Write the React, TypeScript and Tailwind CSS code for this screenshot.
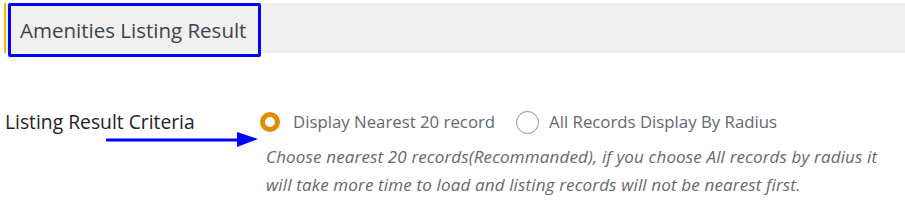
import React from 'react';

export default function App() {
    return (
        <div className="w-[905px] h-[222px] bg-white" style={{ fontFamily: '"Open Sans", "Noto Sans", sans-serif' }}>
            <div className="relative ml-[4px] mt-[3px] h-[50px] bg-[#f0f0f0] border-l-2 border-[#f0c000]">
                <div className="absolute left-[2px] top-0 w-[253px] h-[54px] border-[3px] border-[#0000ff] rounded-[2px]"></div>
                <h2 className="pl-[14px] pt-[13px] text-[20.5px] leading-[28px] text-[#3c434a]">Amenities Listing Result</h2>
            </div>

            <div className="flex mt-[57px]">
                <div className="relative w-[260px] shrink-0 pl-[5px]">
                    <div className="text-[19.3px] leading-[24px] text-[#1d2327]">Listing Result Criteria</div>
                    <svg className="absolute left-[106px] top-[21px]" width="154" height="18" viewBox="0 0 154 18">
                        <line x1="1" y1="9" x2="134" y2="9" stroke="#0000ff" strokeWidth="3" strokeLinecap="round" />
                        <polygon points="131,1 152,8 131,16" fill="#0000ff" />
                    </svg>
                </div>
                <div>
                    <div className="flex items-center h-[24px]">
                        <span className="w-[20px] h-[20px] rounded-full border-[5px] border-[#e08c00] bg-white"></span>
                        <span className="ml-[13px] text-[16.8px] text-[#646970]">Display Nearest 20 record</span>
                        <span className="ml-[21px] w-[23px] h-[23px] rounded-full border-[1.5px] border-[#8c8f94] bg-white"></span>
                        <span className="ml-[10px] text-[16.8px] text-[#646970]">All Records Display By Radius</span>
                    </div>
                    <p className="mt-[9px] ml-[6px] italic text-[17px] leading-[28px] text-[#646970] tracking-[0.15px]">
                        Choose nearest 20 records(Recommanded), if you choose All records by radius it<br />
                        will take more time to load and listing records will not be nearest first.
                    </p>
                </div>
            </div>
        </div>
    );
}
